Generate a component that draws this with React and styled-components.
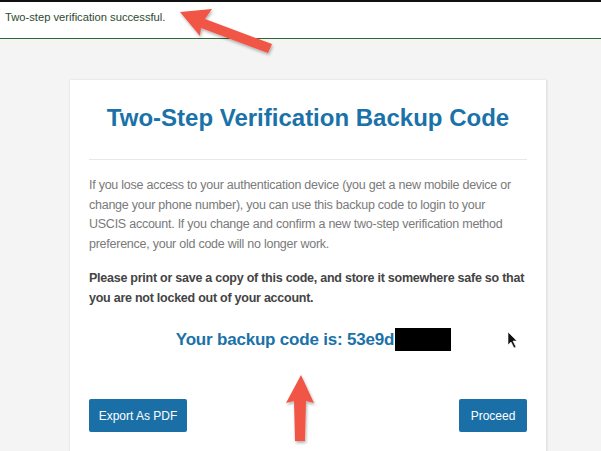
import React from 'react'
import styled, { createGlobalStyle } from 'styled-components'

const GlobalStyle = createGlobalStyle`
    html, body {
        margin: 0;
        padding: 0;
        background: #f4f4f4;
        font-family: "Liberation Sans", Arial, sans-serif;
    }
    #root {
        height: 451px;
        position: relative;
        overflow: hidden;
    }
`
const Banner = styled.div`
    height: 27px;
    background: #fff;
    border-top: 2px solid #111;
    border-bottom: 1px solid #2f6a32;
    padding: 9px 0 0 5px;
    font-size: 11.2px;
    color: #2c4a2e;
`
const Main = styled.div`
    padding: 41px 0 0 70px;
`
const Card = styled.div`
    width: 438px;
    min-height: 400px;
    background: #fff;
    padding: 0 19px;
    box-shadow: 0 0 2px rgba(0, 0, 0, 0.12);
    border-right: 1px solid #e4e4e4;
`
const Title = styled.h1`
    margin: 0;
    padding: 24px 0 27px;
    text-align: center;
    font-size: 24px;
    font-weight: bold;
    color: #1a72a8;
    border-bottom: 1px solid #e8e8e8;
`
const Text = styled.p`
    margin: 0;
    padding-top: ${(props) => props.top || "0px"};
    font-size: 12.5px;
    line-height: 19.5px;
    letter-spacing: ${(props) => props.bold ? "-0.25px" : "-0.25px"};
    color: ${(props) => props.bold ? "#444" : "#7a7a7a"};
    font-weight: ${(props) => props.bold ? "bold" : "normal"};
`
const Line = styled.span`
    display: block;
    white-space: nowrap;
`
const CodeLine = styled.div`
    padding: 20px 0 0 11px;
    display: flex;
    justify-content: center;
    align-items: center;
    font-size: 17px;
    letter-spacing: -0.2px;
    font-weight: bold;
    color: #1a72a8;
`
const Redacted = styled.span`
    display: inline-block;
    width: 56px;
    height: 23px;
    background: #000;
    margin-left: 1px;
`
const Actions = styled.div`
    display: flex;
    justify-content: space-between;
    padding-top: 48px;
`
const Button = styled.button`
    height: 33px;
    width: ${(props) => props.w};
    border: none;
    border-radius: 2px;
    background: #1a70a6;
    color: #fff;
    font-family: "Liberation Sans", Arial, sans-serif;
    font-size: 12px;
    padding: 0;
`
const Overlay = styled.svg`
    position: absolute;
    left: 0;
    top: 0;
    pointer-events: none;
`

const info = [
    "If you lose access to your authentication device (you get a new mobile device or",
    "change your phone number), you can use this backup code to login to your",
    "USCIS account. If you change and confirm a new two-step verification method",
    "preference, your old code will no longer work.",
]
const warning = [
    "Please print or save a copy of this code, and store it somewhere safe so that",
    "you are not locked out of your account.",
]

function App() {
    return (
        <>
            <GlobalStyle />
            <Banner>Two-step verification successful.</Banner>
            <Main>
                <Card>
                    <Title>Two-Step Verification Backup Code</Title>
                    <Text top="16px">
                        {info.map((l) => <Line key={l}>{l}</Line>)}
                    </Text>
                    <Text bold top="15px">
                        {warning.map((l) => <Line key={l}>{l}</Line>)}
                    </Text>
                    <CodeLine>Your backup code is: 53e9d<Redacted /></CodeLine>
                    <Actions>
                        <Button w="98px">Export As PDF</Button>
                        <Button w="68px">Proceed</Button>
                    </Actions>
                </Card>
            </Main>
            <Overlay width="601" height="451" viewBox="0 0 601 451">
                <defs>
                    <filter id="sh" x="-20%" y="-20%" width="140%" height="140%">
                        <feDropShadow dx="1" dy="2" stdDeviation="1.5" floodColor="#000" floodOpacity="0.3" />
                    </filter>
                </defs>
                <g filter="url(#sh)" fill="#f05545">
                    <polygon points="180,12 212,9 205,19 272,44 268,53 201,28 200,36" />
                    <polygon points="301,375 314,403 306,401 305,441 295,441 294,401 286,403" />
                </g>
                <path d="M508,332 L508,345 L511,342 L514,348 L516,347 L513,341 L517,341 Z" fill="#111" stroke="#fff" strokeWidth="0.6" />
            </Overlay>
        </>
    )
}

export default App
